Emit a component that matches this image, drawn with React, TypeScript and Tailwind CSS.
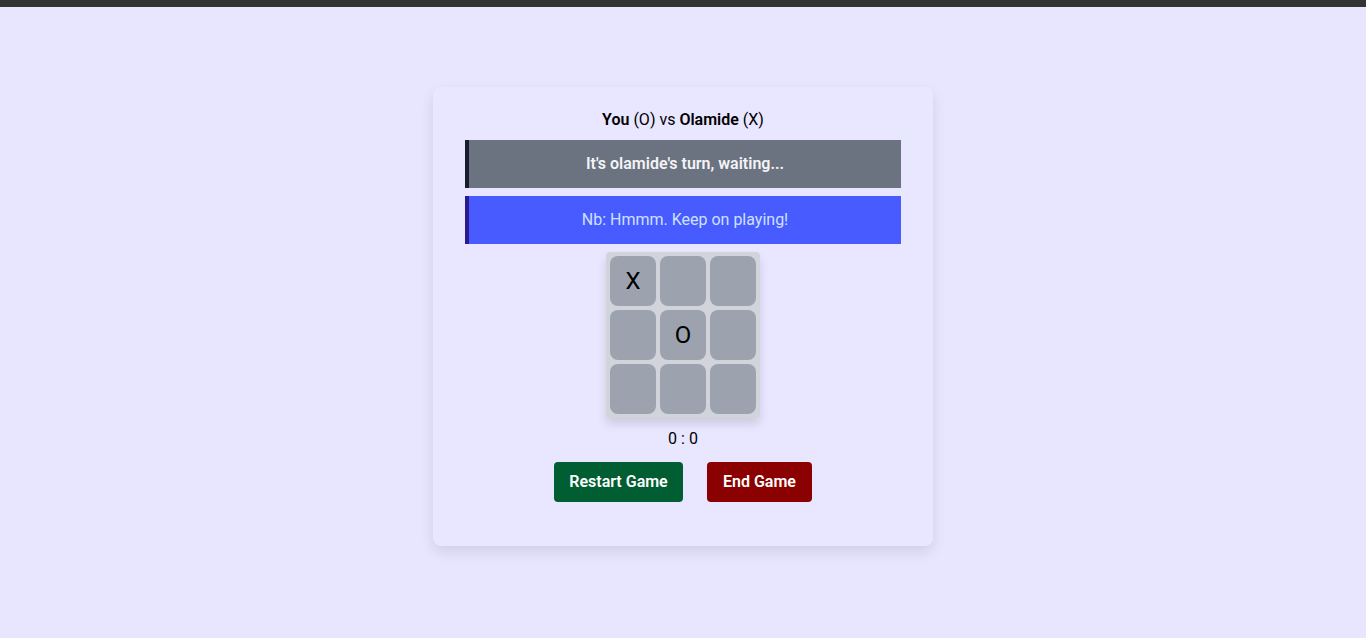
import React from 'react';

const board = ['X', '', '', '', 'O', '', '', '', ''];

export default function App() {
  return (
    <div className="min-h-screen bg-[#e8e5ff] font-['Roboto',sans-serif] text-black">
      <div className="h-[7px] bg-[#333333]" />
      <div className="flex justify-center pt-[80px]">
        <div className="w-[500px] rounded-lg bg-[#e9e6ff] px-8 pt-[21px] pb-[44px] shadow-[0_6px_14px_rgba(0,0,0,0.1)]">
          <div className="text-center text-base leading-6">
            <span className="font-semibold">You</span> (O) vs{' '}
            <span className="font-semibold">Olamide</span> (X)
          </div>
          <div className="mt-2 flex h-12 items-center justify-center border-l-4 border-[#1b1b2e] bg-[#6b7280] text-base font-semibold text-[#f3f4f6]">
            It's olamide's turn, waiting...
          </div>
          <div className="mt-2 flex h-12 items-center justify-center border-l-4 border-[#2d1a8e] bg-[#475bff] text-base text-[#cfe0ff]">
            Nb: Hmmm. Keep on playing!
          </div>
          <div className="mt-2 flex justify-center">
            <div className="grid grid-cols-[repeat(3,46px)] grid-rows-[repeat(3,50px)] gap-1 rounded bg-[#d1d5db] p-1 shadow-[0_6px_10px_rgba(0,0,0,0.12)]">
              {board.map((v, i) => (
                <div
                  key={i}
                  className="flex items-center justify-center rounded-lg bg-[#9ca3af] text-2xl"
                >
                  {v}
                </div>
              ))}
            </div>
          </div>
          <div className="mt-[9px] text-center text-base leading-6">0 : 0</div>
          <div className="mt-[11px] flex justify-center gap-6">
            <button className="h-10 w-[129px] rounded bg-[#005e32] text-base font-semibold text-white">
              Restart Game
            </button>
            <button className="h-10 w-[105px] rounded bg-[#8b0000] text-base font-semibold text-white">
              End Game
            </button>
          </div>
        </div>
      </div>
    </div>
  );
}
